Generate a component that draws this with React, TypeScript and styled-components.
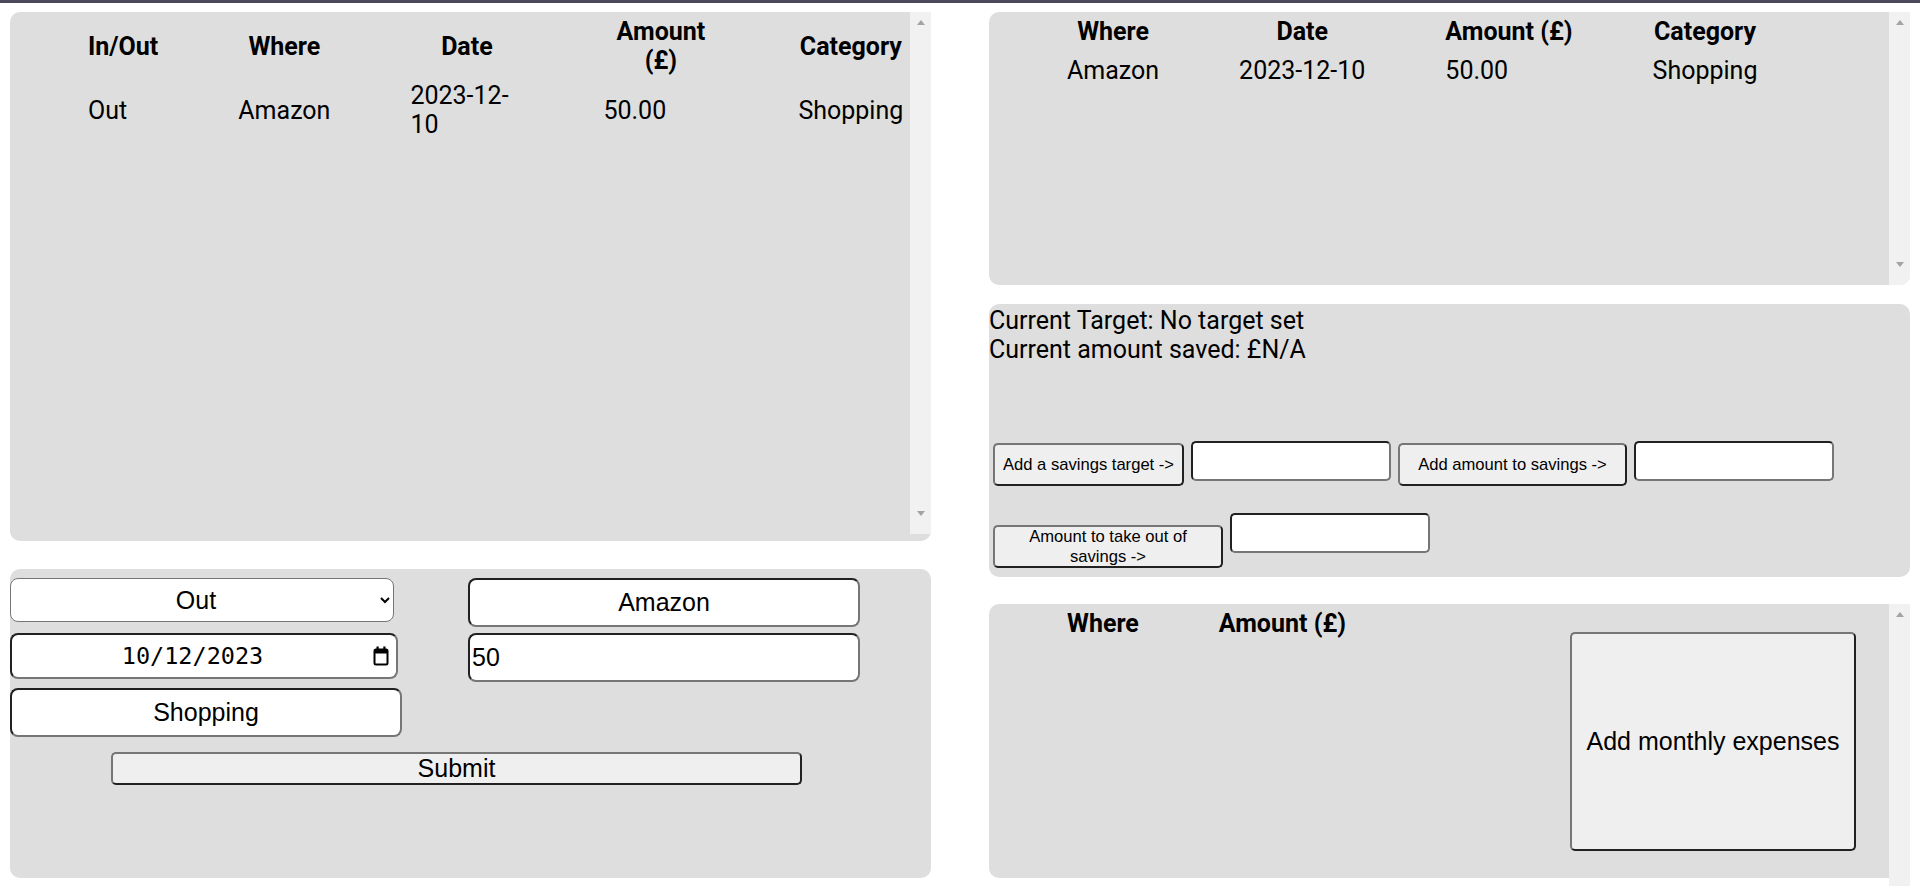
import React from "react";
import styled, { createGlobalStyle, css } from "styled-components";

const GlobalStyle = createGlobalStyle`
  html, body {
    margin: 0;
    padding: 0;
    background: #fff;
  }
  body {
    font-family: Roboto, "Liberation Sans", Arial, sans-serif;
    font-size: 25px;
    color: #000;
    overflow: hidden;
  }
`;

const buttonLook = css`
  box-sizing: border-box;
  font-family: "Liberation Sans", Arial, sans-serif;
  color: #000;
  background: #efefef;
  border: 2px outset #767676;
  border-radius: 5px;
`;

const fieldLook = css`
  box-sizing: border-box;
  font-family: "Liberation Sans", Arial, sans-serif;
  font-size: 25px;
  color: #000;
  background: #fff;
  border: 2px inset #767676;
`;

const TopBar = styled.div`
  height: 3px;
  background: #4b4a5c;
`;

const Page = styled.main`
  display: grid;
  grid-template-columns: 1fr 1fr;
  column-gap: 58px;
  height: 883px;
  box-sizing: border-box;
  padding: 9px 10px 8px;
  overflow: hidden;
`;

const Column = styled.div<{ $gap: number }>`
  display: flex;
  flex-direction: column;
  gap: ${(p) => p.$gap}px;
  min-width: 0;
`;

const Panel = styled.section<{ $h: number; $pb?: number; $mb?: number }>`
  display: flex;
  flex-shrink: 0;
  height: ${(p) => p.$h}px;
  box-sizing: border-box;
  padding-bottom: ${(p) => p.$pb ?? 0}px;
  margin-bottom: ${(p) => p.$mb ?? 0}px;
  background: #dedede;
  border-radius: 10px;
`;

const PanelBody = styled.div<{ $row?: boolean }>`
  flex: 1;
  min-width: 0;
  overflow: hidden;
  padding-left: 37px;
  ${(p) =>
    p.$row &&
    css`
      display: flex;
      align-items: flex-start;
    `}
`;

/* scrollbar look-alike: track with the two arrow buttons */
const Track = styled.div<{ $round?: boolean; $bleed?: boolean }>`
  flex: 0 0 21px;
  display: flex;
  flex-direction: column;
  justify-content: space-between;
  align-items: center;
  box-sizing: border-box;
  padding-bottom: 10px;
  background: #f1f1f1;
  ${(p) => p.$round && "border-bottom-right-radius: 10px;"}
  ${(p) => p.$bleed && "margin-bottom: -60px;"}
`;

const Arrow = styled.span<{ $dir: "up" | "down" }>`
  width: 0;
  height: 0;
  border-left: 4.5px solid transparent;
  border-right: 4.5px solid transparent;
  ${(p) =>
    p.$dir === "up"
      ? css`
          border-bottom: 5px solid #a3a3a3;
          margin-top: 8px;
        `
      : css`
          border-top: 5px solid #a3a3a3;
          margin-bottom: 8px;
        `}
`;

const Table = styled.table`
  width: max-content;
  margin-top: 1px;
  border-spacing: 2px;
  font-family: Roboto, "Liberation Sans", Arial, sans-serif;
  font-size: 25px;
  flex-shrink: 0;
`;

const Th = styled.th<{ $w?: number }>`
  padding: 2px 39px;
  font-weight: 700;
  text-align: center;
  ${(p) => p.$w && `width: ${p.$w}px;`}
`;

const Td = styled.td<{ $pt?: number }>`
  padding: ${(p) => p.$pt ?? 2}px 39px 2px;
  text-align: left;
`;

const SavingsBody = styled.div`
  flex: 1;
  padding-top: 2px;
`;

const StatusLine = styled.div`
  line-height: normal;
`;

const Controls = styled.div`
  display: flex;
  flex-direction: column;
  gap: 27px;
  margin-top: 77px;
  padding-left: 4px;
`;

const ControlRow = styled.div`
  display: flex;
  align-items: baseline;
  gap: 7px;
`;

const SmallButton = styled.button<{ $w: number }>`
  ${buttonLook}
  width: ${(p) => p.$w}px;
  height: 43px;
  padding: 0 6px;
  font-size: 16.6px;
`;

const SmallInput = styled.input`
  ${fieldLook}
  width: 200px;
  height: 40px;
  padding: 1px 2px;
  border-radius: 5px;
`;

const BigButton = styled.button`
  ${buttonLook}
  width: 286px;
  height: 219px;
  align-self: center;
  margin: 0 33px 0 auto;
  padding: 0;
  font-size: 25px;
`;

const FormGrid = styled.form`
  flex: 1;
  display: grid;
  grid-template-columns: 392px 392px;
  grid-template-rows: repeat(3, auto) 1fr;
  column-gap: 66px;
  row-gap: 6px;
  align-items: start;
  padding-top: 9px;
`;

const Select = styled.select`
  box-sizing: border-box;
  width: 384px;
  height: 44px;
  font-family: "Liberation Sans", Arial, sans-serif;
  font-size: 25px;
  color: #000;
  text-align: center;
  text-align-last: center;
  background: #fff;
  border: 1px solid #767676;
  border-radius: 8px;
`;

const TextField = styled.input<{ $align?: "center" | "left" }>`
  ${fieldLook}
  width: 392px;
  height: 49px;
  padding: 0 2px;
  border-radius: 8px;
  text-align: ${(p) => p.$align ?? "center"};
`;

const DateBox = styled.label`
  ${fieldLook}
  display: flex;
  align-items: center;
  width: 388px;
  height: 46px;
  padding-right: 7px;
  border-radius: 8px;
`;

const DateText = styled.input`
  flex: 1;
  min-width: 0;
  padding: 0;
  border: none;
  outline: none;
  background: transparent;
  font-family: "DejaVu Sans Mono", "Liberation Mono", monospace;
  font-size: 23.5px;
  color: #000;
  text-align: center;
`;

const SubmitButton = styled.button`
  ${buttonLook}
  grid-column: 1 / -1;
  justify-self: start;
  width: 691px;
  height: 33px;
  margin: 9px 0 0 101px;
  padding: 0;
  font-size: 25px;
`;

const CalendarIcon = () => (
  <svg width="16" height="20" viewBox="0 0 16 20">
    <rect x="1.5" y="3.5" width="13" height="15" rx="1.5" fill="none" stroke="#000" strokeWidth="2" />
    <rect x="1.5" y="3.5" width="13" height="4" fill="#000" />
    <rect x="3.5" y="0.5" width="2.2" height="4" fill="#000" />
    <rect x="10.3" y="0.5" width="2.2" height="4" fill="#000" />
  </svg>
);

const App = () => {
  return (
    <>
      <GlobalStyle />
      <TopBar />
      <Page>
        <Column $gap={28}>
          <Panel $h={529} $pb={7}>
            <PanelBody>
              <Table>
                <thead>
                  <tr>
                    <Th>In/Out</Th>
                    <Th>Where</Th>
                    <Th $w={113}>Date</Th>
                    <Th $w={115}>Amount (£)</Th>
                    <Th>Category</Th>
                  </tr>
                </thead>
                <tbody>
                  <tr>
                    <Td>Out</Td>
                    <Td>Amazon</Td>
                    <Td>2023-12-10</Td>
                    <Td>50.00</Td>
                    <Td>Shopping</Td>
                  </tr>
                </tbody>
              </Table>
            </PanelBody>
            <Track>
              <Arrow $dir="up" />
              <Arrow $dir="down" />
            </Track>
          </Panel>

          <Panel $h={309}>
            <FormGrid onSubmit={(e) => e.preventDefault()}>
              <Select defaultValue="Out">
                <option value="In">In</option>
                <option value="Out">Out</option>
              </Select>
              <TextField defaultValue="Amazon" />
              <DateBox>
                <DateText defaultValue="10/12/2023" />
                <CalendarIcon />
              </DateBox>
              <TextField $align="left" defaultValue="50" />
              <TextField defaultValue="Shopping" />
              <SubmitButton type="submit">Submit</SubmitButton>
            </FormGrid>
          </Panel>
        </Column>

        <Column $gap={19}>
          <Panel $h={273}>
            <PanelBody>
              <Table>
                <thead>
                  <tr>
                    <Th>Where</Th>
                    <Th>Date</Th>
                    <Th>Amount (£)</Th>
                    <Th>Category</Th>
                  </tr>
                </thead>
                <tbody>
                  <tr>
                    <Td $pt={6}>Amazon</Td>
                    <Td $pt={6}>2023-12-10</Td>
                    <Td $pt={6}>50.00</Td>
                    <Td $pt={6}>Shopping</Td>
                  </tr>
                </tbody>
              </Table>
            </PanelBody>
            <Track $round>
              <Arrow $dir="up" />
              <Arrow $dir="down" />
            </Track>
          </Panel>

          <Panel $h={273} $mb={8}>
            <SavingsBody>
              <StatusLine>Current Target: No target set</StatusLine>
              <StatusLine>Current amount saved: £N/A</StatusLine>
              <Controls>
                <ControlRow>
                  <SmallButton $w={191}>Add a savings target -&gt;</SmallButton>
                  <SmallInput />
                  <SmallButton $w={229}>Add amount to savings -&gt;</SmallButton>
                  <SmallInput />
                </ControlRow>
                <ControlRow>
                  <SmallButton $w={230}>Amount to take out of savings -&gt;</SmallButton>
                  <SmallInput />
                </ControlRow>
              </Controls>
            </SavingsBody>
          </Panel>

          <Panel $h={274}>
            <PanelBody $row>
              <Table>
                <thead>
                  <tr>
                    <Th>Where</Th>
                    <Th>Amount (£)</Th>
                  </tr>
                </thead>
              </Table>
              <BigButton>Add monthly expenses</BigButton>
            </PanelBody>
            <Track $bleed>
              <Arrow $dir="up" />
              <Arrow $dir="down" />
            </Track>
          </Panel>
        </Column>
      </Page>
    </>
  );
};

export default App;
